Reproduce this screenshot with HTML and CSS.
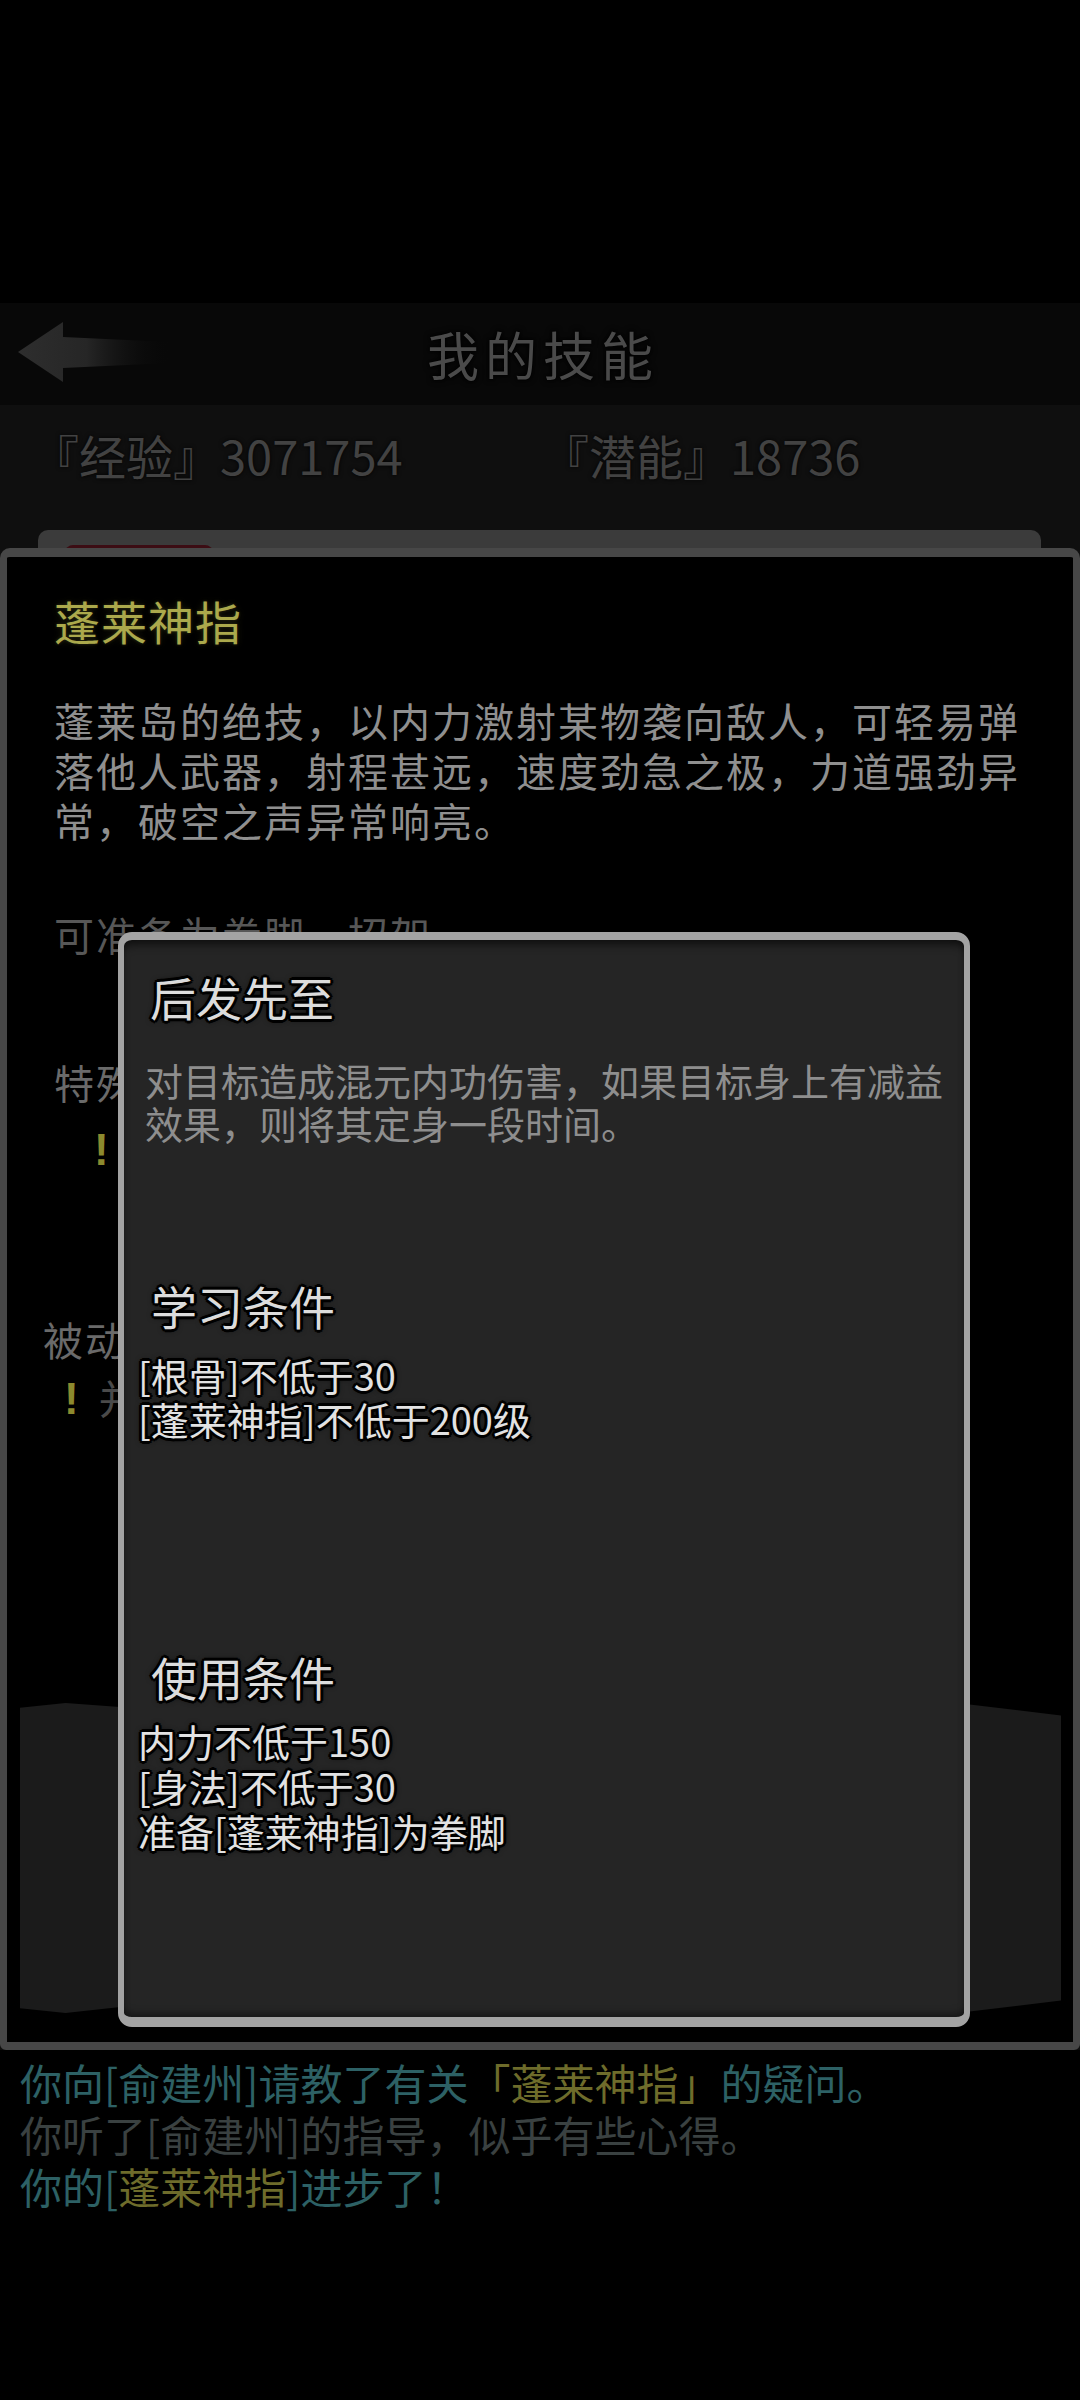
FILE: index.html
```html
<!DOCTYPE html>
<html lang="zh-CN">
<head>
<meta charset="utf-8">
<title>我的技能</title>
<link rel="stylesheet" href="styles.css">
</head>
<body>
<div class="screen">
  <div class="statusbar"></div>
  <header class="topbar">
    <svg class="back" width="180" height="102" viewBox="0 0 180 102">
      <defs>
        <linearGradient id="fade" x1="0" y1="0" x2="1" y2="0">
          <stop offset="0" stop-color="#2e2e2e"/>
          <stop offset="0.45" stop-color="#262626"/>
          <stop offset="1" stop-color="#080808" stop-opacity="0"/>
        </linearGradient>
      </defs>
      <path d="M18 49 L63 19 L63 34 L170 39 L170 60 L63 65 L63 79 Z" fill="url(#fade)"/>
    </svg>
    <h1 class="title">我的技能</h1>
    <span class="spacer"></span>
  </header>
  <section class="content">
    <div class="stats">
      <span class="stat stat-exp">『经验』3071754</span>
      <span class="stat">『潜能』18736</span>
    </div>
    <div class="card"><div class="card-tab"></div></div>
  </section>
  <section class="log">
    <p class="log-line teal">你向[俞建州]请教了有关<span class="olive">「蓬莱神指」</span>的疑问。</p>
    <p class="log-line dim">你听了[俞建州]的指导，似乎有些心得。</p>
    <p class="log-line teal">你的[<span class="olive">蓬莱神指</span>]进步了！</p>
  </section>

  <div class="skill-panel">
    <div class="ghost ghost-left"></div>
    <div class="ghost ghost-right"></div>
    <h2 class="skill-name">蓬莱神指</h2>
    <p class="skill-desc">蓬莱岛的绝技，以内力激射某物袭向敌人，可轻易弹落他人武器，射程甚远，速度劲急之极，力道强劲异常，破空之声异常响亮。</p>
    <p class="skill-note">可准备为拳脚、招架</p>
    <p class="skill-label">特殊</p>
    <p class="skill-warn"><span class="bang">!</span></p>
    <p class="skill-label passive">被动</p>
    <p class="skill-warn passive-warn"><span class="bang">!</span><span class="warn-text">并</span></p>
  </div>

  <div class="perk-dialog">
    <h3 class="perk-title">后发先至</h3>
    <p class="perk-desc">对目标造成混元内功伤害，如果目标身上有减益效果，则将其定身一段时间。</p>
    <h3 class="perk-heading">学习条件</h3>
    <div class="cond">
      <div>[根骨]不低于30</div>
      <div>[蓬莱神指]不低于200级</div>
    </div>
    <h3 class="perk-heading second">使用条件</h3>
    <div class="cond cond-use">
      <div>内力不低于150</div>
      <div>[身法]不低于30</div>
      <div>准备[蓬莱神指]为拳脚</div>
    </div>
  </div>
</div>
</body>
</html>
```

FILE: styles.css
```css
* { box-sizing: border-box; }
html, body { margin: 0; padding: 0; background: #000; }
body {
  font-family: "Noto Sans CJK SC", "Noto Sans", "Liberation Sans", sans-serif;
}
h1, h2, h3, p { margin: 0; font-weight: normal; }

.screen {
  position: relative;
  width: 1080px;
  height: 2400px;
  overflow: hidden;
  background: #000;
}

.statusbar { height: 303px; background: #000; }

.topbar {
  height: 102px;
  background: #080808;
  display: grid;
  grid-template-columns: 1fr auto 1fr;
  align-items: center;
}
.back { display: block; }
.title {
  font-size: 52px;
  line-height: 60px;
  letter-spacing: 6px;
  color: #4a4a4a;
  text-shadow: 0 0 3px #000, 0 0 6px #000;
  padding-left: 6px;
}

.content {
  height: 1645px;
  background: #0f0f0f;
}
.stats {
  height: 125px;
  padding: 20px 0 0 32px;
  display: flex;
}
.stat {
  font-size: 47px;
  line-height: 60px;
  color: #424242;
  text-shadow: 0 0 4px #000;
}
.stat-exp { width: 510px; }

.card {
  margin: 0 39px 0 38px;
  height: 1400px;
  background: #3b3b3b;
  border-radius: 10px 10px 0 0;
  padding: 15px 0 0 27px;
}
.card-tab {
  width: 148px;
  height: 20px;
  background: #3c0d14;
  border-radius: 8px 8px 0 0;
}

.log { padding: 6px 0 0 20px; }
.log-line {
  font-size: 42px;
  line-height: 52px;
  white-space: nowrap;
}
.teal { color: #2d6165; }
.dim { color: #3a4141; }
.olive { color: #6e6c2b; }

/* outer skill panel (modal) */
.skill-panel {
  position: absolute;
  left: 0;
  top: 548px;
  width: 1080px;
  height: 1502px;
  border: 7px solid #474747;
  border-top-width: 9px;
  border-bottom-width: 8px;
  border-radius: 10px 10px 6px 6px;
  background: #000;
  padding: 35px 40px 0 47px;
  font-size: 40px;
}
.ghost {
  position: absolute;
  top: 1146px;
  height: 310px;
  background: #1b1b1b;
}
.ghost-left {
  left: 13px;
  width: 130px;
  clip-path: polygon(0 1.5%, 35% 0, 100% 2%, 100% 97%, 35% 100%, 0 98.5%);
}
.ghost-right {
  left: 950px;
  width: 104px;
  clip-path: polygon(0 0, 100% 4%, 100% 96%, 0 100%);
}
.skill-name {
  position: relative;
  font-size: 46px;
  line-height: 56px;
  color: #aba94c;
  letter-spacing: 1px;
  text-shadow: 0 0 3px #2a2a12, 0 0 7px #1e1e0c;
}
.skill-desc {
  position: relative;
  margin-top: 47px;
  font-size: 40px;
  letter-spacing: 2px;
  line-height: 50px;
  color: #8f8f8f;
}
.skill-note {
  position: relative;
  margin-top: 64px;
  line-height: 50px;
  color: #575757;
  letter-spacing: 2px;
  white-space: nowrap;
}
.skill-label {
  position: relative;
  margin-top: 98px;
  white-space: nowrap;
  line-height: 50px;
  color: #6a6a6a;
  letter-spacing: 2px;
}
.skill-label.passive { margin-top: 139px; margin-left: -11px; }
.skill-warn {
  position: relative;
  margin-top: 16px;
  white-space: nowrap;
  line-height: 50px;
  padding-left: 40px;
}
.passive-warn { margin-top: 8px; padding-left: 10px; }
.bang {
  font-family: "Liberation Sans", sans-serif;
  font-weight: bold;
  font-size: 44px;
  color: #8c8a2e;
}
.warn-text { color: #4a4a4a; margin-left: 20px; }

/* inner perk dialog */
.perk-dialog {
  position: absolute;
  left: 118px;
  top: 932px;
  width: 852px;
  height: 1095px;
  border: 6px solid #a3a3a3;
  border-top-width: 8px;
  border-bottom-width: 10px;
  border-radius: 14px;
  background: #252525;
  box-shadow: inset 0 8px 10px -4px rgba(0, 0, 0, 0.65), inset 0 -6px 8px -4px rgba(0, 0, 0, 0.5);
  padding: 28px 15px 0 21px;
}
.perk-title, .perk-heading, .cond {
  color: #e2e2e2;
  text-shadow:
    -2px -2px 0 #000, 2px -2px 0 #000, -2px 2px 0 #000, 2px 2px 0 #000,
    0 -3px 0 #000, 0 3px 0 #000, -3px 0 0 #000, 3px 0 0 #000, 0 0 6px #000;
}
.perk-title {
  font-size: 46px;
  line-height: 56px;
  margin-left: 5px;
  color: #dcdcdc;
}
.perk-desc {
  margin-top: 34px;
  font-size: 38px;
  line-height: 43px;
  color: #8e8e8e;
}
.perk-heading {
  margin-top: 133px;
  margin-left: 6px;
  font-size: 46px;
  line-height: 56px;
  color: #dcdcdc;
}
.perk-heading.second { margin-top: 207px; }
.cond {
  margin-top: 20px;
  margin-left: -7px;
  font-size: 38px;
  line-height: 44px;
  white-space: nowrap;
}
.cond-use { margin-top: 14px; line-height: 45px; }
```
